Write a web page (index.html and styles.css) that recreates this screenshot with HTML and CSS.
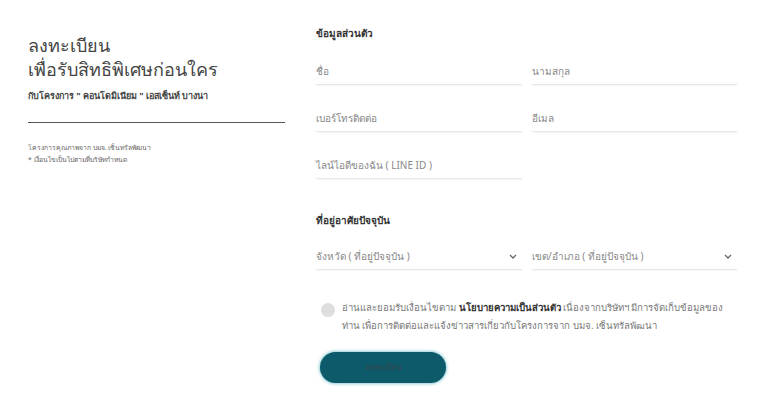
FILE: index.html
```html
<!DOCTYPE html>
<html lang="th">
<head>
<meta charset="utf-8">
<title>ลงทะเบียน</title>
<link rel="stylesheet" href="styles.css">
</head>
<body>
<div class="page">
  <section class="intro">
    <h1 class="title">ลงทะเบียน<br>เพื่อรับสิทธิพิเศษก่อนใคร</h1>
    <p class="subtitle">กับโครงการ " คอนโดมิเนียม " เอสเซ็นท์ บางนา</p>
    <hr class="divider">
    <p class="note">โครงการคุณภาพจาก บมจ. เซ็นทรัลพัฒนา<br>* เงื่อนไขเป็นไปตามที่บริษัทกำหนด</p>
  </section>
  <form class="form">
    <h2 class="section-title">ข้อมูลส่วนตัว</h2>
    <div class="grid">
      <div class="field">ชื่อ</div>
      <div class="field">นามสกุล</div>
      <div class="field">เบอร์โทรติดต่อ</div>
      <div class="field">อีเมล</div>
      <div class="field">ไลน์ไอดีของฉัน ( LINE ID )</div>
    </div>
    <h2 class="section-title second">ที่อยู่อาศัยปัจจุบัน</h2>
    <div class="grid selects">
      <div class="field select"><span>จังหวัด ( ที่อยู่ปัจจุบัน )</span><svg class="chev" viewBox="0 0 8 5" width="8" height="5"><path d="M1 1l3 3 3-3" fill="none" stroke="#666" stroke-width="1.3"/></svg></div>
      <div class="field select"><span>เขต/อำเภอ ( ที่อยู่ปัจจุบัน )</span><svg class="chev" viewBox="0 0 8 5" width="8" height="5"><path d="M1 1l3 3 3-3" fill="none" stroke="#666" stroke-width="1.3"/></svg></div>
    </div>
    <div class="consent">
      <span class="check"></span>
      <p class="consent-text">อ่านและยอมรับเงื่อนไขตาม <b>นโยบายความเป็นส่วนตัว</b> เนื่องจากบริษัทฯ มีการจัดเก็บข้อมูลของ ท่าน เพื่อการติดต่อและแจ้งข่าวสารเกี่ยวกับโครงการจาก บมจ. เซ็นทรัลพัฒนา</p>
    </div>
    <button type="button" class="submit">ลงทะเบียน</button>
  </form>
</div>
</body>
</html>
```
FILE: styles.css
```css
* { box-sizing: border-box; }
html, body { margin: 0; background: #fff; }
body {
  font-family: "Noto Sans", "DejaVu Sans", sans-serif;
  color: #444;
}
.page {
  display: flex;
  width: 768px;
  height: 400px;
  overflow: hidden;
}
.intro {
  width: 316px;
  padding: 33px 31px 0 28px;
}
.title {
  margin: 0;
  font-weight: 300;
  font-size: 18px;
  line-height: 24px;
  color: #444;
}
.subtitle {
  margin: 8px 0 0;
  font-size: 9px;
  font-weight: 700;
  color: #444;
}
.divider {
  margin: 19px 0 0;
  border: 0;
  border-top: 1px solid #555;
}
.note {
  margin: 19px 0 0;
  font-size: 6.8px;
  line-height: 12px;
  color: #666;
}
.form {
  width: 421px;
  padding-top: 26px;
  display: flex;
  flex-direction: column;
  align-items: flex-start;
}
.section-title {
  margin: 0;
  font-size: 10px;
  font-weight: 700;
  color: #333;
}
.section-title.second { margin-top: 34px; }
.grid {
  width: 100%;
  display: grid;
  grid-template-columns: 206px 205px;
  column-gap: 10px;
  row-gap: 23px;
  margin-top: 20px;
}
.selects { margin-top: 18px; }
.field {
  height: 24px;
  font-size: 10px;
  color: #888;
  border-bottom: 1px solid #e8e8e8;
  box-shadow: 0 1px 1px rgba(0,0,0,0.03);
  display: flex;
  align-items: center;
  justify-content: space-between;
  padding-bottom: 2px;
}
.field.select { padding-right: 5px; }
.chev { flex: none; }
.consent {
  margin-top: 29px;
  display: flex;
  align-items: flex-start;
  gap: 7px;
  padding-left: 5px;
  width: 100%;
}
.check {
  flex: none;
  width: 14px;
  height: 14px;
  border-radius: 50%;
  background: #dedede;
  margin-top: 4px;
}
.consent-text {
  margin: 0;
  font-size: 9.6px;
  line-height: 17.5px;
  color: #777;
  width: 392px;
}
.consent-text b { color: #333; }
.submit {
  margin: 18px 0 0 4px;
  width: 126px;
  height: 31px;
  border: 0;
  border-radius: 16px;
  background: #0c5a6a;
  color: #2a4d58;
  font-family: inherit;
  font-size: 8px;
  font-weight: 700;
  box-shadow: 0 0 3px 1px rgba(40, 160, 180, 0.5);
}
```
